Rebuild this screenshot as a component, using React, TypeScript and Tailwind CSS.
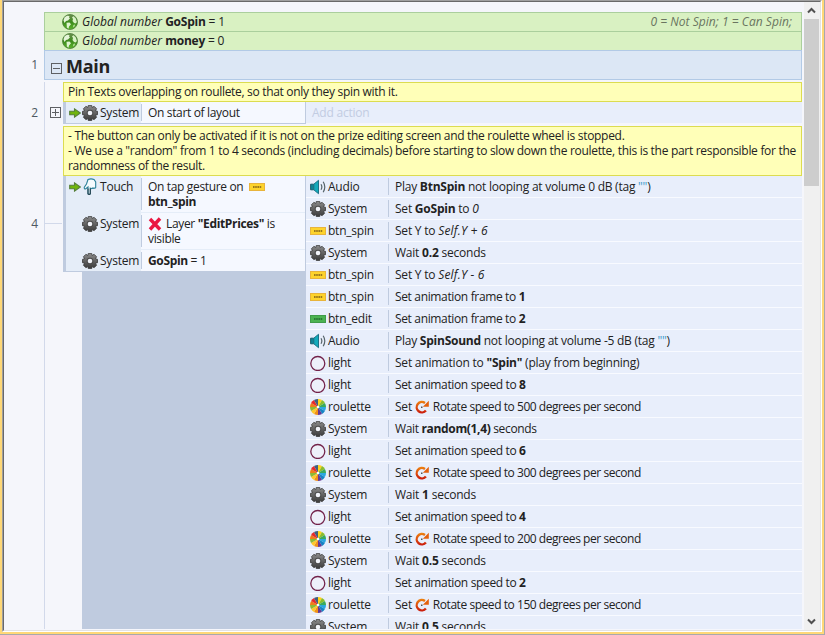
import React from "react";

const dividerLine = "w-px bg-[#bfcbdf] shrink-0";

function Gear() {
  return (
    <svg width="16" height="16" viewBox="0 0 16 16" className="shrink-0">
      <defs>
        <linearGradient id="gear" gradientUnits="userSpaceOnUse" x1="0" y1="0" x2="0" y2="16">
          <stop offset="0" stopColor="#8e8e8e" />
          <stop offset="1" stopColor="#383838" />
        </linearGradient>
      </defs>
      <path
        d="M6.300.4h3.400l.5 2.100 1.900-1.200 2.500 2.500-1.200 1.900 2.100.6v3.400l-2.100.6 1.200 1.900-2.500 2.500-1.900-1.200-.5 2.100H6.300l-.5-2.100-1.900 1.200-2.500-2.500 1.200-1.900-2.100-.6V6.300l2.100-.6-1.200-1.900 2.500-2.500 1.900 1.200z"
        fill="url(#gear)"
        stroke="#3a3a3a"
        strokeWidth=".8"
      />
      <circle cx="8" cy="8" r="3.300" fill="#4c4c4c" />
      <circle cx="8" cy="8" r="2.300" fill="#f2f4fa" />
    </svg>
  );
}

function Globe() {
  return (
    <svg width="16" height="16" viewBox="0 0 16 16" className="shrink-0">
      <defs>
        <linearGradient id="globe" x1="0" y1="0" x2="0" y2="1">
          <stop offset="0" stopColor="#6d8f52" />
          <stop offset=".5" stopColor="#3d8a1c" />
          <stop offset="1" stopColor="#5cb52c" />
        </linearGradient>
      </defs>
      <circle cx="8" cy="8" r="7.500" fill="url(#globe)" stroke="#4b7c38" strokeWidth=".8" />
      <path d="M1.500 6.500 2.500 3.500 5 1.700l2.500.3-.5 1.500 1 .8-2 2.200-2 .5L2.500 9z" fill="#e4f5d8" />
      <path d="M4.500 8.800l3-.3 1.500 1.800-2 2.200-.5 2.300-1.600-1.300z" fill="#dff3d0" />
      <path d="M10 3.200l1.500-1 2.300 2.300L14.900 8l-1.200 1.500L12 9l-1.500-2L11 5z" fill="#d9f2c6" />
      <path d="m11.500 11 1.500-.5-.5 2-1.500 1z" fill="#c4e8a8" />
    </svg>
  );
}

function Arrow() {
  return (
    <svg width="12" height="10" viewBox="0 0 12 10" className="shrink-0">
      <path d="M.7 3.200h4.800V.9L11.300 5 5.500 9.100V6.800H.7z" fill="#6fb50b" stroke="#567f3a" strokeWidth="1.100" />
    </svg>
  );
}

function Speaker() {
  return (
    <svg width="16" height="16" viewBox="0 0 16 16" className="shrink-0">
      <path d="M.6 5.200h3.200v5.600H.6z" fill="#0e8396" stroke="#1b5f70" />
      <path d="M3.800 5.200 8.500 1.300v13.400L3.800 10.800z" fill="#12aabb" stroke="#1b7386" />
      <path d="M11 5.300q1.700 2.700 0 5.400M13.200 2.800q3.200 5.200 0 10.400" fill="none" stroke="#56646a" strokeWidth="1.200" />
    </svg>
  );
}

function Light() {
  return (
    <svg width="16" height="16" viewBox="0 0 16 16" className="shrink-0">
      <circle cx="7.800" cy="8.500" r="7" fill="#edf0fa" stroke="#73234b" strokeWidth="1.300" />
    </svg>
  );
}

const wedges = [
  { color: "#ffd21a", d: "M8 8V0A8 8 0 0 1 12 1.070z" },
  { color: "#8bbd2a", d: "M8 8 12 1.070A8 8 0 0 1 14.930 4z" },
  { color: "#3aaa5c", d: "M8 8 14.930 4A8 8 0 0 1 16 8z" },
  { color: "#2aa7df", d: "M8 8H16A8 8 0 0 1 14.930 12z" },
  { color: "#1684c4", d: "M8 8 14.930 12A8 8 0 0 1 12 14.930z" },
  { color: "#653a92", d: "M8 8 12 14.930A8 8 0 0 1 8 16z" },
  { color: "#f0901a", d: "M8 8V16A8 8 0 0 1 4 14.930z" },
  { color: "#ffc928", d: "M8 8 4 14.930A8 8 0 0 1 1.070 12z" },
  { color: "#8db935", d: "M8 8 1.070 12A8 8 0 0 1 0 8z" },
  { color: "#ef7d1a", d: "M8 8H0A8 8 0 0 1 1.070 4z" },
  { color: "#e62b2b", d: "M8 8 1.070 4A8 8 0 0 1 4 1.070z" },
  { color: "#3f5f80", d: "M8 8 4 1.070A8 8 0 0 1 8 0z" },
];

function Roulette() {
  return (
    <svg width="16" height="16" viewBox="0 0 16 16" className="shrink-0">
      {wedges.map((w) => (
        <path key={w.d} d={w.d} fill={w.color} />
      ))}
      <circle cx="8" cy="8" r="1.300" fill="#fff" />
    </svg>
  );
}

function Pill({ green = false }: { green?: boolean }) {
  return (
    <svg width="16" height="16" viewBox="0 0 16 16" className="inline-block shrink-0 align-[-4px]">
      <rect x=".5" y="4.500" width="15" height="7" fill={green ? "#4cb351" : "#fdd32c"} stroke={green ? "#409b49" : "#e8b43c"} />
      <path d="M4 8h8.500" stroke={green ? "#2c7a36" : "#9c7a1c"} strokeDasharray="1.600 .6" strokeWidth="1.800" />
    </svg>
  );
}

function Rotate() {
  return (
    <svg width="14" height="14" viewBox="0 0 14 14" className="mr-1 inline-block align-[-3px]">
      <defs>
        <linearGradient id="rotate" gradientUnits="userSpaceOnUse" x1="0" y1="0" x2="0" y2="14">
          <stop offset="0" stopColor="#f08a10" />
          <stop offset="1" stopColor="#c8140c" />
        </linearGradient>
      </defs>
      <path d="M10.900 10.500A5.200 5.200 0 1 1 10 3" fill="none" stroke="url(#rotate)" strokeWidth="2.400" />
      <path d="M13.800.8v5.900H7.800z" fill="#e4600c" />
      <rect x="6" y="6.500" width="1.500" height="1.500" fill="#555" />
    </svg>
  );
}

function Hand() {
  return (
    <svg width="14" height="18" viewBox="0 0 14 18" className="shrink-0">
      <path
        d="M5 1.500q3-1.200 6 0l1.700 2.500v5.500q-.8 1.300-1.700.3-.8 1.200-1.800.2-.8 1-1.900.2v5.600q-1.200 1.200-2.300 0V9L2.500 11Q1 11 1.300 9.300L3.500 6z"
        fill="#f4fbfe"
        stroke="#2a8099"
        strokeWidth="1.100"
      />
      <path d="M5 10.500v5.300q1.200 1.200 2.300 0v-5.300" fill="none" stroke="#27404c" strokeWidth="1.100" />
    </svg>
  );
}

function Cross() {
  return (
    <svg width="14" height="14" viewBox="0 0 14 14" className="mr-1 inline-block align-[-3px]">
      <path d="m2 2 10 10.500M12 1.500 2 12.500" stroke="#ea1741" strokeWidth="3.400" />
    </svg>
  );
}

function Toggle({ plus = false }: { plus?: boolean }) {
  return (
    <svg width="11" height="11" viewBox="0 0 11 11" className="shrink-0" shapeRendering="crispEdges">
      <rect x=".5" y=".5" width="10" height="10" fill="none" stroke="#5e6064" />
      <path d={plus ? "M2 5.500h7M5.500 2v7" : "M2 5.500h7"} stroke="#5e6064" />
    </svg>
  );
}

type Kind = "Audio" | "System" | "btn_spin" | "btn_edit" | "light" | "roulette";

const icons: Record<Kind, React.ReactNode> = {
  Audio: <Speaker />,
  System: <Gear />,
  btn_spin: <Pill />,
  btn_edit: <Pill green />,
  light: <Light />,
  roulette: <Roulette />,
};

const speed = (n: number) => (
  <>
    Set <Rotate />
    <span className="tracking-[-0.45px]">Rotate speed to {n} degrees per second</span>
  </>
);
const play = (name: string, db: string) => (
  <span className="tracking-[-0.24px]">
    Play <b>{name}</b> not looping at volume {db} dB (tag <span className="text-[#3f9ccc]">""</span>)
  </span>
);
const wait = (n: string) => (
  <>
    Wait <b>{n}</b> seconds
  </>
);
const animSpeed = (n: number) => (
  <span className="tracking-[-0.35px]">
    Set animation speed to <b>{n}</b>
  </span>
);
const frame = (n: number) => (
  <span className="tracking-[-0.35px]">
    Set animation frame to <b>{n}</b>
  </span>
);

const actions: [Kind, React.ReactNode][] = [
  ["Audio", play("BtnSpin", "0")],
  ["System", <>Set <b>GoSpin</b> to <i>0</i></>],
  ["btn_spin", <>Set Y to <i className="tracking-[0.2px]">Self.Y + 6</i></>],
  ["System", wait("0.2")],
  ["btn_spin", <>Set Y to <i className="tracking-[0.2px]">Self.Y - 6</i></>],
  ["btn_spin", frame(1)],
  ["btn_edit", frame(2)],
  ["Audio", play("SpinSound", "-5")],
  ["light", <>Set animation to <b>"Spin"</b> (play from beginning)</>],
  ["light", animSpeed(8)],
  ["roulette", speed(500)],
  ["System", <span className="tracking-[-0.34px]">{wait("random(1,4)")}</span>],
  ["light", animSpeed(6)],
  ["roulette", speed(300)],
  ["System", wait("1")],
  ["light", animSpeed(4)],
  ["roulette", speed(200)],
  ["System", wait("0.5")],
  ["light", animSpeed(2)],
  ["roulette", speed(150)],
  ["System", wait("0.5")],
];

function Condition({
  icon,
  name,
  trigger = false,
  className,
  children,
}: {
  icon: React.ReactNode;
  name: string;
  trigger?: boolean;
  className: string;
  children: React.ReactNode;
}) {
  return (
    <div className={`flex bg-[#f5f8ff] ${className}`}>
      <div className="flex w-[75px] shrink-0 bg-[#e5edf8] pl-[3px]">
        <div className="flex h-[21px] items-center">
          <span className="w-[13px]">{trigger && <Arrow />}</span>
          <span className="flex w-4 justify-center">{icon}</span>
          <span className="ml-[2px]">{name}</span>
        </div>
      </div>
      <div className={`my-[2px] ${dividerLine}`} />
      <div className="grow pt-[3px] pl-[6px] leading-[15px] tracking-[-0.34px]">{children}</div>
    </div>
  );
}

export default function App() {
  return (
    <div className="flex h-[635px] w-[825px] flex-col overflow-hidden border-r border-b border-[#a8a9ad] bg-[#ffd877] pr-[2px] pb-[2px] pl-[2px] font-['Open_Sans','Noto_Sans',sans-serif] text-[12px] leading-[15px] tracking-[-0.22px] text-[#222]">
      <div className="flex min-h-0 grow border border-t-[#a0a0a0] border-r-[#fff] border-b-[#fff] border-l-[#a0a0a0]">
        <div className="flex min-w-0 grow border border-t-[#696969] border-r-[#e3e3e3] border-b-[#e3e3e3] border-l-[#696969] bg-[#f5f6fb]">
          {/* line numbers */}
          <div className="w-10 shrink-0 pr-[6px] text-right text-[#4e5863]">
            <div className="pt-[55px]">1</div>
            <div className="pt-[33px]">2</div>
            <div className="pt-[96px]">4</div>
          </div>
          {/* event sheet */}
          <div className="w-[758px] shrink-0 pt-[10px]">
            <div className="flex h-[19px] items-center border border-b-0 border-[#abcf9d] bg-[#d9f1c2] pb-px pl-[17px]">
              <Globe />
              <span className="ml-1 grow whitespace-pre"><i className="tracking-[0.02px]">Global number </i><b>GoSpin</b> = 1</span>
              <i className="mr-[9px] tracking-[0.04px] text-[#6a7560]">0 = Not Spin; 1 = Can Spin;</i>
            </div>
            <div className="flex h-[19px] items-center border border-b-0 border-[#abcf9d] bg-[#d9f1c2] pb-px pl-[17px]">
              <Globe />
              <span className="ml-1 whitespace-pre"><i className="tracking-[0.02px]">Global number </i><b>money</b> = 0</span>
            </div>
            <div className="flex h-[30px] items-center border border-[#b2cae6] bg-[#dce7f5] pt-[2px] pl-[6px]">
              <span className="pt-[5px]"><Toggle /></span>
              <b className="ml-1 text-[18px] leading-[24px] tracking-[-0.25px]">Main</b>
            </div>
            <div className="h-[2px]" />
            <div className="flex h-[547px] overflow-hidden border-l border-[#d2d9ea]">
              <div className="w-[18px] shrink-0">
                <div className="mt-[25px] -mr-px ml-[5px]"><Toggle plus /></div>
                <div className="mt-[105px] h-px w-[17px] bg-[#d2d9ea]" />
              </div>
              <div className="w-[739px] shrink-0">
                <div className="h-[19px] border border-b-0 border-[#dcdc50] bg-[#ffffb8] pt-[1px] pl-1 tracking-[-0.31px]">
                  Pin Texts overlapping on roullete, so that only they spin with it.
                </div>
                <div className="flex h-[23px] border-t border-[#dcdc50]">
                  <div className="w-[243px] border-r border-b border-l-[3px] border-[#bfcbdf]">
                    <Condition icon={<Gear />} name="System" trigger className="h-[21px]">On start of layout</Condition>
                  </div>
                  <div className="mb-px grow bg-[#e8eefb] pt-[3px] pl-[6px] text-[#c2cce2]">Add action</div>
                </div>
                <div className="mt-[2px] h-[50px] border border-[#dcdc50] bg-[#ffffb8] pt-[1px] pl-1 tracking-[-0.3px] whitespace-nowrap">
                  <div>- The button can only be activated if it is not on the prize editing screen and the roulette wheel is stopped.</div>
                  <div>- We use a "random" from 1 to 4 seconds (including decimals) before starting to slow down the roulette, this is the part responsible for the</div>
                  <div>randomness of the result.</div>
                </div>
                <div className="flex">
                  <div className="flex h-[462px] w-[243px] shrink-0 flex-col">
                    <div className="border-r border-b border-l-[3px] border-[#bfcbdf] bg-[#e5edf8]">
                      <Condition icon={<Hand />} name="Touch" trigger className="h-[36px]">
                        On tap gesture on <span className="inline-block h-[15px] w-[19px] pl-[3px] align-top"><Pill /></span><br /><b>btn_spin</b>
                      </Condition>
                      <Condition icon={<Gear />} name="System" className="mt-px h-[36px]">
                        <Cross />Layer <b>"EditPrices"</b> is<br />visible
                      </Condition>
                      <Condition icon={<Gear />} name="System" className="mt-px h-[21px]"><b>GoSpin</b> = 1</Condition>
                    </div>
                    <div className="ml-[19px] grow bg-[#bfcbdf]" />
                  </div>
                  <div className="min-w-0 grow">
                    {actions.map(([kind, text], i) => (
                      <div key={i} className="flex h-[22px] border-b border-[#f8faff] bg-[#e8eefb] pl-1">
                        <div className="flex w-[78px] shrink-0 items-center">
                          {icons[kind]}
                          <span className="ml-[2px]">{kind}</span>
                        </div>
                        <div className={`my-[2px] ${dividerLine}`} />
                        <div className="pt-[3px] pl-[6px] whitespace-nowrap">{text}</div>
                      </div>
                    ))}
                  </div>
                </div>
              </div>
            </div>
          </div>
          {/* scrollbar */}
          <div className="ml-[2px] flex grow flex-col bg-[#f0f0f0]">
            <div className="flex h-[17px] w-[15px] items-center justify-center">
              <svg width="9" height="7" viewBox="0 0 9 7"><path d="m1 5.500 3.500-3.500L8 5.500" fill="none" stroke="#505050" strokeWidth="2" /></svg>
            </div>
            <div className="h-[167px] w-[15px] bg-[#cdcdcd]" />
            <div className="grow" />
            <div className="flex h-[17px] w-[15px] items-center justify-center">
              <svg width="9" height="7" viewBox="0 0 9 7"><path d="M1 1.500 4.500 5 8 1.500" fill="none" stroke="#505050" strokeWidth="2" /></svg>
            </div>
          </div>
        </div>
      </div>
    </div>
  );
}
